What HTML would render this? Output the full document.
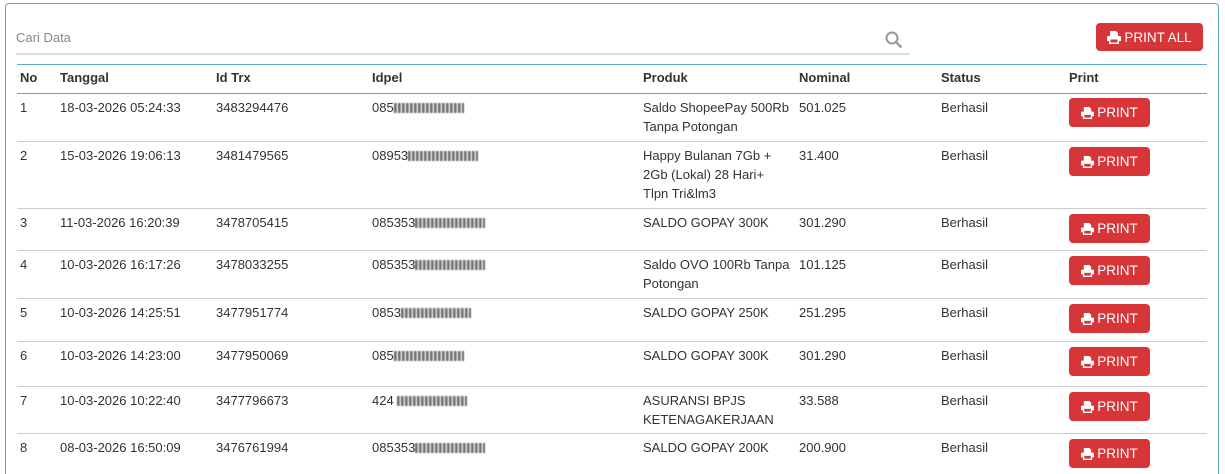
<!DOCTYPE html>
<html style="overflow:hidden;height:474px"><head><meta charset="utf-8"><style>
*{box-sizing:border-box;margin:0;padding:0}
body{width:1225px;height:474px;background:#fff;font-family:"Liberation Sans",sans-serif;font-size:13px;color:#333;overflow:hidden;position:relative}
.card{position:absolute;left:5px;top:3px;width:1214px;height:471px;border:1px solid #5aa9c9;border-bottom:none;border-radius:4px 4px 0 0}
.search{position:absolute;left:16px;top:30px;width:894px;height:25px;border-bottom:2px solid #ddd;color:#888;font-size:13px}
.btn{position:absolute;background:#d63638;color:#fff;border-radius:4px;font-size:13.5px;display:flex;align-items:center;justify-content:center;gap:3px}
.row{position:absolute;left:17px;width:1190px;border-top:1px solid #ccc}
.c{position:absolute;top:4px;line-height:19px}
.h .c{font-weight:bold;top:3px}
.blur{display:inline-block;width:70px;height:10px;vertical-align:-1px;background:repeating-linear-gradient(90deg,#444 0 2px,#888 2px 3px,#fff 3px 4px);filter:blur(.6px);opacity:.8}
</style></head><body>
<div class="card"></div>
<div class="search">Cari Data
<svg style="position:absolute;left:869px;top:1px" width="18" height="18" viewBox="0 0 18 18"><circle cx="7" cy="7" r="5.5" fill="none" stroke="#999" stroke-width="2"/><path d="M11 11l5.5 5.5" stroke="#999" stroke-width="2.4"/></svg></div>
<div class="btn" style="left:1096px;top:23px;width:107px;height:28px"><svg width="14" height="13" viewBox="0 0 14 13"><path d="M3 0h6l2 2v3H3z M1 5h12a1 1 0 0 1 1 1v4h-2v3H2v-3H0V6a1 1 0 0 1 1-1z" fill="#fff"/><rect x="3.5" y="8.5" width="7" height="3" fill="#d63638"/></svg>PRINT ALL</div>
<div class="row h" style="top:64px;height:30px;border-top:1px solid #5aa9c9;border-bottom:1px solid #5aa9c9">
<div class="c" style="left:3px">No</div><div class="c" style="left:43px">Tanggal</div><div class="c" style="left:199px">Id Trx</div><div class="c" style="left:355px">Idpel</div><div class="c" style="left:626px">Produk</div><div class="c" style="left:782px">Nominal</div><div class="c" style="left:924px">Status</div><div class="c" style="left:1052px">Print</div></div>

<div id="rows"></div>
<script>
var d=[[94,47,"1","18-03-2026 05:24:33","3483294476","085","Saldo ShopeePay 500Rb<br>Tanpa Potongan","501.025"],
[141,67,"2","15-03-2026 19:06:13","3481479565","08953","Happy Bulanan 7Gb +<br>2Gb (Lokal) 28 Hari+<br>Tlpn Tri&amp;lm3","31.400"],
[208,42,"3","11-03-2026 16:20:39","3478705415","085353","SALDO GOPAY 300K","301.290"],
[250,48,"4","10-03-2026 16:17:26","3478033255","085353","Saldo OVO 100Rb Tanpa<br>Potongan","101.125"],
[298,43,"5","10-03-2026 14:25:51","3477951774","0853","SALDO GOPAY 250K","251.295"],
[341,45,"6","10-03-2026 14:23:00","3477950069","085","SALDO GOPAY 300K","301.290"],
[386,47,"7","10-03-2026 10:22:40","3477796673","424 ","ASURANSI BPJS<br>KETENAGAKERJAAN","33.588"],
[433,41,"8","08-03-2026 16:50:09","3476761994","085353","SALDO GOPAY 200K","200.900"]];
var h="";d.forEach(function(r){h+='<div class="row" style="top:'+r[0]+'px;height:'+r[1]+'px;'+(r[2]=="1"?'border-top:none':'')+'"><div class="c" style="left:3px">'+r[2]+'</div><div class="c" style="left:43px">'+r[3]+'</div><div class="c" style="left:199px">'+r[4]+'</div><div class="c" style="left:355px">'+r[5]+'<span class="blur"></span></div><div class="c" style="left:626px">'+r[6]+'</div><div class="c" style="left:782px">'+r[7]+'</div><div class="c" style="left:924px">Berhasil</div><div class="btn" style="left:1052px;top:'+(r[2]=="1"?4:5)+'px;width:81px;height:29px"><svg width="13" height="12" viewBox="0 0 14 13"><path d="M3 0h6l2 2v3H3z M1 5h12a1 1 0 0 1 1 1v4h-2v3H2v-3H0V6a1 1 0 0 1 1-1z" fill="#fff"/><rect x="3.5" y="8.5" width="7" height="3" fill="#d63638"/></svg>PRINT</div></div>'});
document.getElementById("rows").innerHTML=h;
</script>
</body></html>
